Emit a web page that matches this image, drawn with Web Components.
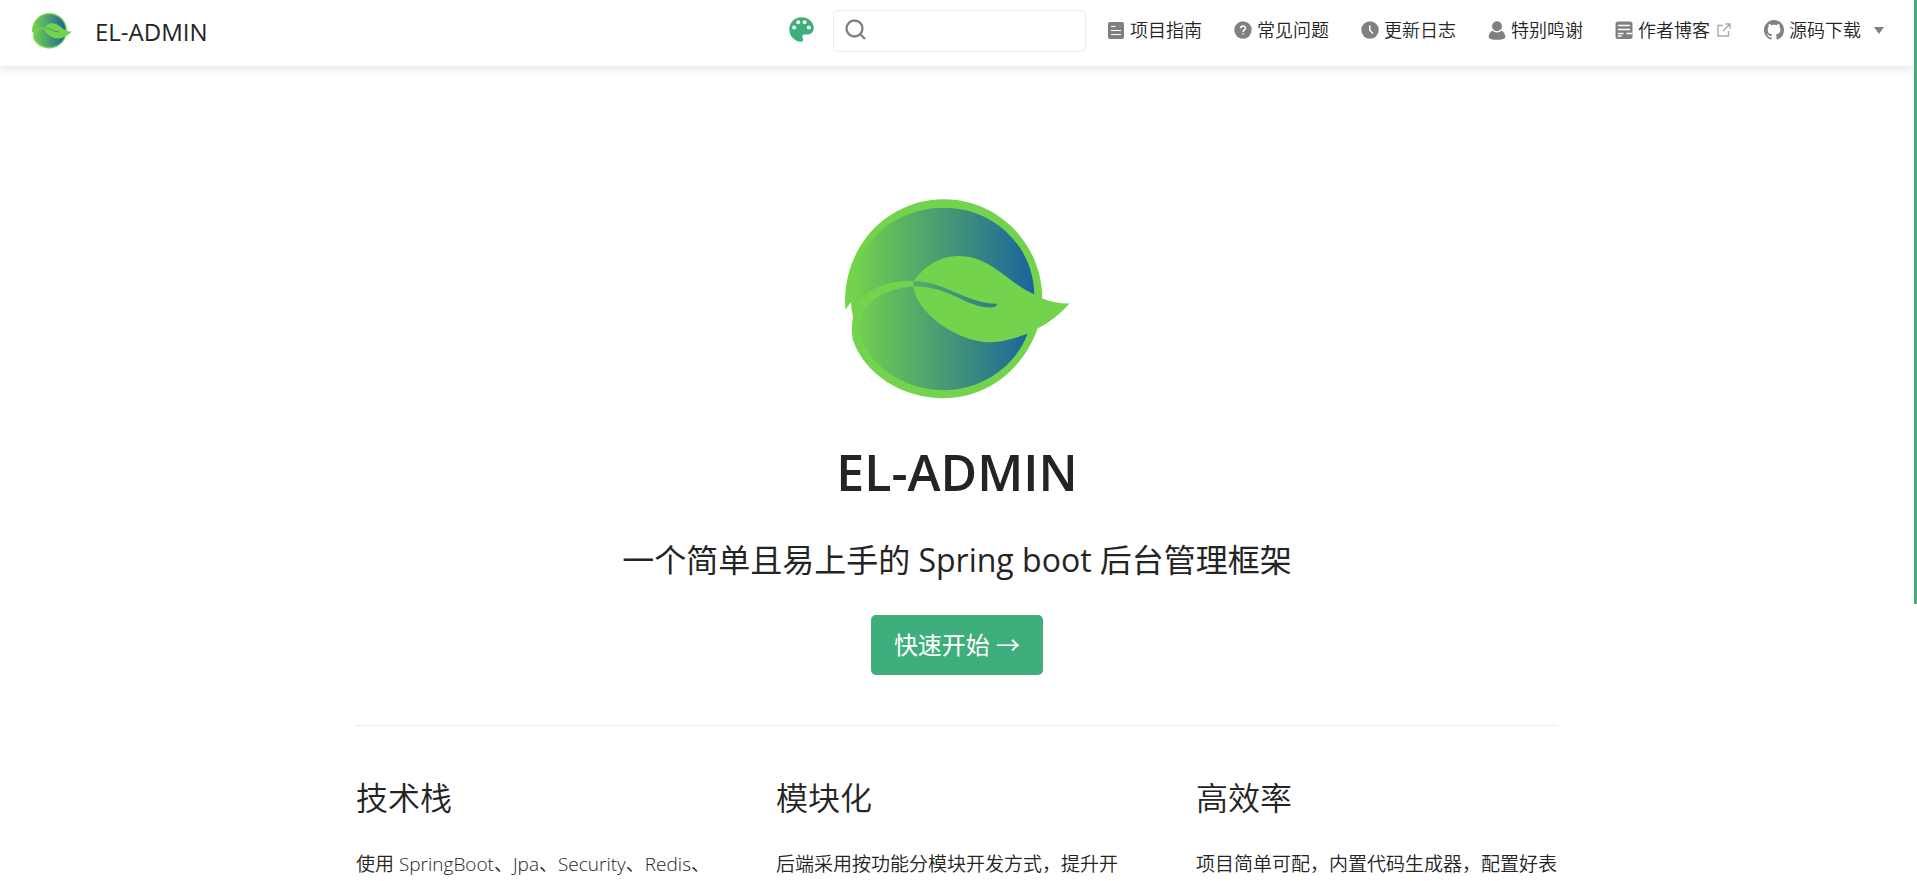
<!DOCTYPE html>
<html lang="zh-CN">
<head>
    <meta charset="UTF-8">
    <meta name="viewport" content="width=device-width, initial-scale=1.0">
    <title>EL-ADMIN</title>

    <style>
        html, body {
            height: 100%;
            margin: 0;
        }
        body {
            --accent: #3eaf7c;
            --border: #eaecef;
            --icon: #808080;
            font-family: "Open Sans", "Noto Sans CJK SC", sans-serif;
            font-size: 18px;
            color: #242424;
            background: #fff;
            overflow: hidden;
        }
    </style>
</head>
<body>
    <el-page>
        <nav-bar slot="header">
            <nav-item icon="guide">项目指南</nav-item>
            <nav-item icon="question">常见问题</nav-item>
            <nav-item icon="clock">更新日志</nav-item>
            <nav-item icon="user">特别鸣谢</nav-item>
            <nav-item icon="blog" external>作者博客</nav-item>
            <nav-item icon="github" dropdown>源码下载</nav-item>
        </nav-bar>

        <home-hero>
            <span slot="title">EL-ADMIN</span>
            <span slot="description">一个简单且易上手的 Spring boot 后台管理框架</span>
            <span slot="action">快速开始 →</span>
        </home-hero>

        <feature-list>
            <feature-item>
                <span slot="title">技术栈</span>
                使用 SpringBoot、Jpa、Security、Redis、
            </feature-item>
            <feature-item>
                <span slot="title">模块化</span>
                后端采用按功能分模块开发方式，提升开
            </feature-item>
            <feature-item>
                <span slot="title">高效率</span>
                项目简单可配，内置代码生成器，配置好表
            </feature-item>
        </feature-list>
    </el-page>

    <script>
        // All small icons share an 18x18 box, except where a viewBox is given
        const icons = {
            guide: `<svg width="18" height="18" viewBox="0 0 18 18">
                <rect x="1" y="1" width="16" height="17" rx="2" fill="currentColor"/>
                <path d="M4 5.500H8.500M4 9.500H14M4 13.500H14" stroke="#fff" stroke-width="1.100"/></svg>`,
            question: `<svg width="18" height="18" viewBox="0 0 18 18">
                <circle cx="9" cy="9" r="8.700" fill="currentColor"/>
                <path d="M6.600 7.200C6.600 4.200 11.500 4.200 11.500 7.100C11.500 8.900 9 8.900 9 10.900M9 12.200V13.600" fill="none" stroke="#fff" stroke-width="1.500"/></svg>`,
            clock: `<svg width="18" height="18" viewBox="0 0 18 18">
                <circle cx="9" cy="9" r="8.700" fill="currentColor"/>
                <path d="M8.800 4.500V9.300L12 12.500" fill="none" stroke="#fff" stroke-width="1.500"/></svg>`,
            user: `<svg width="18" height="19" viewBox="0 0 18 19">
                <circle cx="9" cy="5.200" r="5" fill="currentColor"/>
                <path d="M4.400 9.800Q9 13.400 13.600 9.800C16 11 17.400 13.400 17.400 16.500Q16 18.800 9 18.800Q2 18.800.6 16.500C.6 13.400 2 11 4.400 9.800Z" fill="currentColor"/></svg>`,
            blog: `<svg width="18" height="18" viewBox="0 0 18 18">
                <rect x=".5" y=".5" width="17" height="17.500" rx="2.500" fill="currentColor"/>
                <path d="M3.500 4.500H14.500M3.500 8.500H14.500M3.500 12.500H8M12 12.500H17M3.500 15H6" stroke="#fff" stroke-width="1.500" stroke-linecap="round"/></svg>`,
            github: `<svg width="20" height="20" viewBox="0 0 16 16">
                <path fill="currentColor" d="M8 0C3.580 0 0 3.580 0 8c0 3.540 2.290 6.530 5.470 7.590.4.070.55-.17.55-.38 0-.19-.01-.82-.01-1.490-2.010.37-2.530-.49-2.690-.94-.09-.23-.48-.94-.82-1.130-.28-.15-.68-.52-.01-.53.63-.01 1.080.58 1.230.82.72 1.210 1.870.87 2.330.66.07-.52.28-.87.51-1.070-1.780-.2-3.640-.89-3.640-3.950 0-.87.31-1.590.82-2.150-.08-.2-.36-1.020.08-2.120 0 0 .67-.21 2.200.82.64-.18 1.320-.27 2-.27s1.360.09 2 .27c1.530-1.040 2.200-.82 2.200-.82.44 1.100.16 1.920.08 2.120.51.56.82 1.270.82 2.150 0 3.070-1.870 3.750-3.650 3.950.29.25.54.73.54 1.480 0 1.070-.01 1.930-.01 2.200 0 .21.15.46.55.38A8.010 8.010 0 0 0 16 8c0-4.420-3.580-8-8-8z"/></svg>`
        };

        class ElLogo extends HTMLElement {
            #markup = `
                <style>
                    :host { display: block; }
                    svg { display: block; width: 100%; height: auto; }
                </style>
                <svg viewBox="72 57 674 600" role="img" aria-label="logo">
                    <defs>
                        <linearGradient id="g" gradientUnits="userSpaceOnUse" x1="90" y1="0" x2="640" y2="0">
                            <stop offset="0" stop-color="#74d34c"/>
                            <stop offset="1" stop-color="#1a639c"/>
                        </linearGradient>
                    </defs>
                    <path fill="#74d34c" d="M73 388L90 366Q91 390 96 410Q90 445 95 478C130 580 240 654 368 654C495 654 605 570 649 445Q700 420 745 370Q705 371 663 355C662 190 530 58 368 58C200 58 60 200 73 388Z"/>
                    <path fill="url(#g)" d="M90 366C88 200 210 83 368 83C515 83 636 195 639 342C560 310 510 228 412 228C355 228 310 258 278 303C205 300 130 325 99 385Q92 378 90 366Z"/>
                    <path fill="url(#g)" d="M277 319C200 322 115 365 117 440C120 540 240 630 368 630C475 630 580 565 619 461C560 482 530 486 508 486C400 486 282 390 277 319Z"/>
                    <path fill="url(#g)" d="M277 303C370 303 430 370 529 371Q524 382 508 382C430 380 380 315 277 319Z"/>
                </svg>
            `
            constructor() {
                super();
                this.attachShadow({ mode: 'open' });
                this.shadowRoot.innerHTML = this.#markup;
            }
        }
        customElements.define('el-logo', ElLogo);


        class NavItem extends HTMLElement {
            #style = `
                <style>
                    :host { display: block; }
                    a {
                        display: flex;
                        align-items: center;
                        gap: 5px;
                        color: inherit;
                        text-decoration: none;
                        font-weight: 350;
                        line-height: 28px;
                        white-space: nowrap;
                    }
                    a:hover { color: var(--accent); }
                    svg { display: block; color: var(--icon); }
                    .external { color: #aaa; margin: 0 1px 0 2px; }
                    .arrow {
                        margin-left: 8px;
                        border: 5px solid transparent;
                        border-top: 7px solid var(--icon);
                        border-bottom: 0;
                    }
                </style>
            `
            constructor() {
                super();
                this.attachShadow({ mode: 'open' });
            }

            connectedCallback() {
                let extra = '';
                if (this.hasAttribute('external')) {
                    extra = `<svg class="external" width="14" height="14" viewBox="0 0 14 14" fill="none" stroke="currentColor" stroke-width="1.400">
                        <path d="M6 2.500H1V13H11.500V8M8.500 1H13V5.500M13 1L6 8"/></svg>`;
                }
                if (this.hasAttribute('dropdown')) {
                    extra = '<span class="arrow"></span>';
                }
                this.shadowRoot.innerHTML = `${this.#style}
                    <a href="#">${icons[this.getAttribute('icon')]}<slot></slot>${extra}</a>`;
            }
        }
        customElements.define('nav-item', NavItem);


        class SearchBox extends HTMLElement {
            #markup = `
                <style>
                    :host { display: block; }
                    label {
                        display: flex;
                        align-items: center;
                        gap: 8px;
                        box-sizing: border-box;
                        width: 253px;
                        height: 42px;
                        padding: 0 11px 4px;
                        border: 1px solid var(--border);
                        border-radius: 5px;
                        color: var(--icon);
                    }
                    svg { flex: none; }
                    input {
                        flex: 1;
                        min-width: 0;
                        border: 0;
                        outline: 0;
                        background: none;
                        font: inherit;
                    }
                </style>
                <label>
                    <svg width="21" height="21" viewBox="0 0 21 21" fill="none" stroke="currentColor" stroke-width="2.300">
                        <circle cx="9.500" cy="9.500" r="8"/>
                        <path d="M15 15L20 20"/>
                    </svg>
                    <input type="search" aria-label="搜索">
                </label>
            `
            constructor() {
                super();
                this.attachShadow({ mode: 'open' });
                this.shadowRoot.innerHTML = this.#markup;
            }
        }
        customElements.define('search-box', SearchBox);


        class NavBar extends HTMLElement {
            #markup = `
                <style>
                    :host { display: block; }
                    header {
                        display: flex;
                        align-items: center;
                        justify-content: space-between;
                        box-sizing: border-box;
                        height: 66px;
                        padding: 0 30px 4px 32px;
                        background: #fff;
                        box-shadow: 0 2px 10px rgba(0, 0, 0, .12);
                    }
                    .brand {
                        display: flex;
                        align-items: center;
                        gap: 23px;
                        color: inherit;
                        text-decoration: none;
                        font-size: 24px;
                        font-weight: 500;
                    }
                    el-logo { width: 40px; }
                    .tools, nav { display: flex; align-items: center; }
                    nav { gap: 32px; margin-left: 21px; padding-bottom: 2px; }
                    button {
                        margin: 0 19px 0 0;
                        padding: 0 0 4px;
                        border: 0;
                        background: none;
                        color: var(--accent);
                        cursor: pointer;
                    }
                    button svg { display: block; }
                </style>
                <header>
                    <a class="brand" href="#"><el-logo></el-logo>EL-ADMIN</a>
                    <div class="tools">
                        <button type="button" aria-label="主题">
                            <svg width="25" height="25" viewBox="0 0 25 25">
                                <path fill="currentColor" d="M12.500.3C5.500.3.3 5.800.3 12.500S5.700 24.700 12.200 24.700C14.300 24.700 14.800 22.800 13.700 21C12.700 19.200 13.700 17.600 15.600 17.600H18.200C22 17.600 24.700 15 24.700 11.300C24.700 5 19.300.3 12.500.3Z"/>
                                <g fill="#fff"><circle cx="5.200" cy="10.500" r="2"/><circle cx="9.200" cy="5.300" r="2"/><circle cx="15.600" cy="5.300" r="2"/><circle cx="19.800" cy="10.500" r="2"/></g>
                            </svg>
                        </button>
                        <search-box></search-box>
                        <nav><slot></slot></nav>
                    </div>
                </header>
            `
            constructor() {
                super();
                this.attachShadow({ mode: 'open' });
                this.shadowRoot.innerHTML = this.#markup;
            }
        }
        customElements.define('nav-bar', NavBar);


        class HomeHero extends HTMLElement {
            #markup = `
                <style>
                    :host {
                        display: flex;
                        flex-direction: column;
                        align-items: center;
                        padding: 133px 0 50px;
                        text-align: center;
                    }
                    el-logo { width: 225px; }
                    h1 {
                        margin: 35px 0 0;
                        font-size: 50px;
                        font-weight: 600;
                        line-height: 76px;
                    }
                    p {
                        margin: 29px 0 34px;
                        font-size: 32px;
                        font-weight: 400;
                        line-height: 42px;
                    }
                    a {
                        padding: 0 23px;
                        border-radius: 5px;
                        background: var(--accent);
                        color: #fff;
                        font-size: 24px;
                        line-height: 60px;
                        text-decoration: none;
                    }
                </style>
                <el-logo></el-logo>
                <h1><slot name="title"></slot></h1>
                <p><slot name="description"></slot></p>
                <a href="#"><slot name="action"></slot></a>
            `
            constructor() {
                super();
                this.attachShadow({ mode: 'open' });
                this.shadowRoot.innerHTML = this.#markup;
            }
        }
        customElements.define('home-hero', HomeHero);


        class FeatureList extends HTMLElement {
            #markup = `
                <style>
                    :host {
                        display: grid;
                        grid-template-columns: repeat(3, 1fr);
                        gap: 58px;
                        max-width: 1202px;
                        margin: 0 auto;
                        padding: 47px 0;
                        border-top: 1px solid var(--border);
                    }
                </style>
                <slot></slot>
            `
            constructor() {
                super();
                this.attachShadow({ mode: 'open' });
                this.shadowRoot.innerHTML = this.#markup;
            }
        }
        customElements.define('feature-list', FeatureList);


        class FeatureItem extends HTMLElement {
            #markup = `
                <style>
                    :host { display: block; }
                    h2 {
                        margin: 0 0 25px;
                        font-size: 32px;
                        font-weight: 350;
                        line-height: 50px;
                    }
                    p {
                        margin: 0;
                        font-size: 19px;
                        font-weight: 350;
                        line-height: 32px;
                    }
                </style>
                <h2><slot name="title"></slot></h2>
                <p><slot></slot></p>
            `
            constructor() {
                super();
                this.attachShadow({ mode: 'open' });
                this.shadowRoot.innerHTML = this.#markup;
            }
        }
        customElements.define('feature-item', FeatureItem);


        // Page shell: content on the left, thin scroll indicator on the right
        class ElPage extends HTMLElement {
            #markup = `
                <style>
                    :host {
                        display: grid;
                        grid-template-columns: 1fr 3px;
                        height: 100%;
                    }
                    .content { min-width: 0; overflow: hidden; }
                    .rail {
                        display: grid;
                        grid-template-rows: 24fr 11fr;
                    }
                    .thumb { background: var(--accent); }
                </style>
                <div class="content">
                    <slot name="header"></slot>
                    <main><slot></slot></main>
                </div>
                <div class="rail"><div class="thumb"></div></div>
            `
            constructor() {
                super();
                this.attachShadow({ mode: 'open' });
                this.shadowRoot.innerHTML = this.#markup;
            }
        }
        customElements.define('el-page', ElPage);
    </script>
</body>
</html>
